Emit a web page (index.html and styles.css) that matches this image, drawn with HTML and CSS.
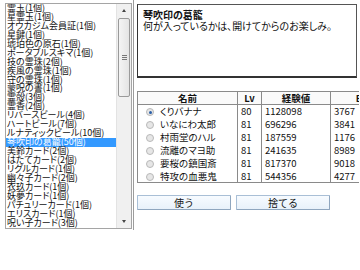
FILE: index.html
```html
<!DOCTYPE html>
<html lang="ja">
<head>
    <meta charset="UTF-8">
    <title>アイテム</title>
    <link rel="stylesheet" href="styles.css">
</head>
<body>
    <div class="screen">
        <div class="item-list">
            <ul class="items">
                <li>霊玉(1個)</li>
                <li>星霊玉(1個)</li>
                <li>オウカジム会員証(1個)</li>
                <li>星鍵(1個)</li>
                <li>琥珀色の原石(1個)</li>
                <li>ポータブルスキマ(1個)</li>
                <li>技の霊珠(2個)</li>
                <li>疾風の霊珠(1個)</li>
                <li>守の霊珠(1個)</li>
                <li>蒙呪の書(1個)</li>
                <li>霊殻(3個)</li>
                <li>霊香(2個)</li>
                <li>リバースビール(4個)</li>
                <li>ハートビール(7個)</li>
                <li>ルナティックビール(10個)</li>
                <li class="selected">琴吹印の葛籠(50個)</li>
                <li>美鈴カード(2個)</li>
                <li>はたてカード(2個)</li>
                <li>リグルカード(1個)</li>
                <li>幽々子カード(2個)</li>
                <li>衣玖カード(1個)</li>
                <li>妖夢カード(1個)</li>
                <li>パチュリーカード(1個)</li>
                <li>エリスカード(1個)</li>
                <li>呪い子カード(3個)</li>
            </ul>
            <div class="scrollbar">
                <div class="arrow up"></div>
                <div class="track">
                    <div class="thumb"><span class="grip"></span></div>
                </div>
                <div class="arrow down"></div>
            </div>
        </div>

        <div class="detail">
            <div class="desc-box">
                <div class="desc-title">琴吹印の葛籠</div>
                <div class="desc-text">何が入っているかは、開けてからのお楽しみ。</div>
            </div>

            <table class="members">
                <tr>
                    <th class="c-name">名前</th>
                    <th class="c-lv">Lv</th>
                    <th class="c-exp">経験値</th>
                    <th class="c-b">B</th>
                </tr>
                <tr>
                    <td><span class="radio checked"></span>くりバナナ</td>
                    <td>80</td><td>1128098</td><td>3767</td>
                </tr>
                <tr>
                    <td><span class="radio"></span>いなにわ太郎</td>
                    <td>81</td><td>696296</td><td>3841</td>
                </tr>
                <tr>
                    <td><span class="radio"></span>村雨堂のハル</td>
                    <td>81</td><td>187559</td><td>1176</td>
                </tr>
                <tr>
                    <td><span class="radio"></span>流離のマヨ助</td>
                    <td>81</td><td>241635</td><td>8989</td>
                </tr>
                <tr>
                    <td><span class="radio"></span>要桜の鎮国斎</td>
                    <td>81</td><td>817370</td><td>9018</td>
                </tr>
                <tr>
                    <td><span class="radio"></span>特攻の血悪鬼</td>
                    <td>81</td><td>544356</td><td>4277</td>
                </tr>
            </table>

            <div class="actions">
                <button type="button">使う</button>
                <button type="button">捨てる</button>
            </div>
        </div>
    </div>
</body>
</html>
```

FILE: styles.css
```css
body {
    margin: 0;
    background: #fff;
    font-family: "Noto Sans CJK JP", "Liberation Sans", sans-serif;
    font-feature-settings: "palt";
    color: #111;
}
.screen {
    display: flex;
    width: 360px;
    height: 270px;
    padding-left: 5px;
    box-sizing: border-box;
    overflow: hidden;
}

/* item list box */
.item-list {
    display: flex;
    margin-top: 3px;
    width: 127px;
    height: 226px;
    border: 1px solid #a5a5a5;
    box-sizing: border-box;
}
.items {
    flex: 1;
    list-style: none;
    margin: 0;
    padding: 0;
    overflow: hidden;
    font-size: 9px;
    line-height: 8.95px;
}
.items li {
    height: 8.95px;
    padding-left: 1px;
    white-space: nowrap;
}
.items li.selected {
    background: #3399ff;
    color: #fff;
}
.scrollbar {
    width: 14px;
    display: flex;
    flex-direction: column;
    background: #f0f0f0;
    border-left: 1px solid #e3e3e3;
}
.arrow {
    height: 13px;
    position: relative;
}
.arrow::after {
    content: "";
    position: absolute;
    left: 5px;
    top: 5px;
    border-left: 2px solid transparent;
    border-right: 2px solid transparent;
}
.arrow.up::after {
    border-bottom: 3px solid #444;
}
.arrow.down::after {
    border-top: 3px solid #444;
}
.track {
    flex: 1;
    padding-top: 1px;
}
.thumb {
    height: 77px;
    margin: 0 1px;
    border: 1px solid #9a9a9a;
    border-radius: 2px;
    background: linear-gradient(to right, #f4f4f4, #e4e4e4);
    display: flex;
    align-items: center;
    justify-content: center;
}
.grip {
    width: 5px;
    height: 5px;
    background: repeating-linear-gradient(to bottom, #777 0 1px, transparent 1px 2px);
}

/* right panel */
.detail {
    margin-left: 1px;
    width: 226px;
    height: 230px;
    border-left: 1px solid #9c9c9c;
    padding: 4px 0 0 3px;
    box-sizing: border-box;
    overflow: hidden;
    flex-shrink: 0;
}
.desc-box {
    width: 220px;
    height: 74px;
    border: 1px solid #555;
    border-bottom: 2px solid #333;
    border-left-color: #333;
    box-sizing: border-box;
    padding: 4px 5px;
    font-size: 10px;
    line-height: 11px;
}
.desc-title {
    font-weight: bold;
}

.members {
    margin-top: 13px;
    border-collapse: collapse;
    table-layout: fixed;
    width: 250px;
    font-size: 9.5px;
    line-height: 12px;
    border: 1px solid #8a8a8a;
}
.members th,
.members td {
    box-sizing: border-box;
    padding: 0 3px;
    height: 13px;
    border-left: 1px solid #8a8a8a;
    white-space: nowrap;
    overflow: hidden;
    text-align: left;
}
.members th {
    height: 12px;
    font-weight: bold;
    text-align: center;
    border-bottom: 1px solid #8a8a8a;
    background: #fafafa;
}
.c-name { width: 100px; }
.c-lv { width: 24px; }
.c-exp { width: 69px; }
.c-b { width: 57px; }

.radio {
    display: inline-block;
    width: 6px;
    height: 6px;
    margin: 0 6px 0 5px;
    border: 1px solid #b9b9b9;
    border-radius: 50%;
    background: #e6e6e6;
    vertical-align: -1px;
    position: relative;
}
.radio.checked::after {
    content: "";
    position: absolute;
    left: 1.5px;
    top: 1.5px;
    width: 3px;
    height: 3px;
    border-radius: 50%;
    background: #2a5fa8;
}

.actions {
    display: flex;
    gap: 5px;
    margin-top: 12px;
}
.actions button {
    width: 94px;
    height: 15px;
    padding: 0;
    border: 1px solid #a9bfd6;
    border-right-color: #8fa6bf;
    border-bottom-color: #8fa6bf;
    border-radius: 1px;
    background: linear-gradient(to bottom, #f7fbff, #e8f1fa);
    font-family: inherit;
    font-size: 10px;
    line-height: 12px;
    color: #111;
}
```
